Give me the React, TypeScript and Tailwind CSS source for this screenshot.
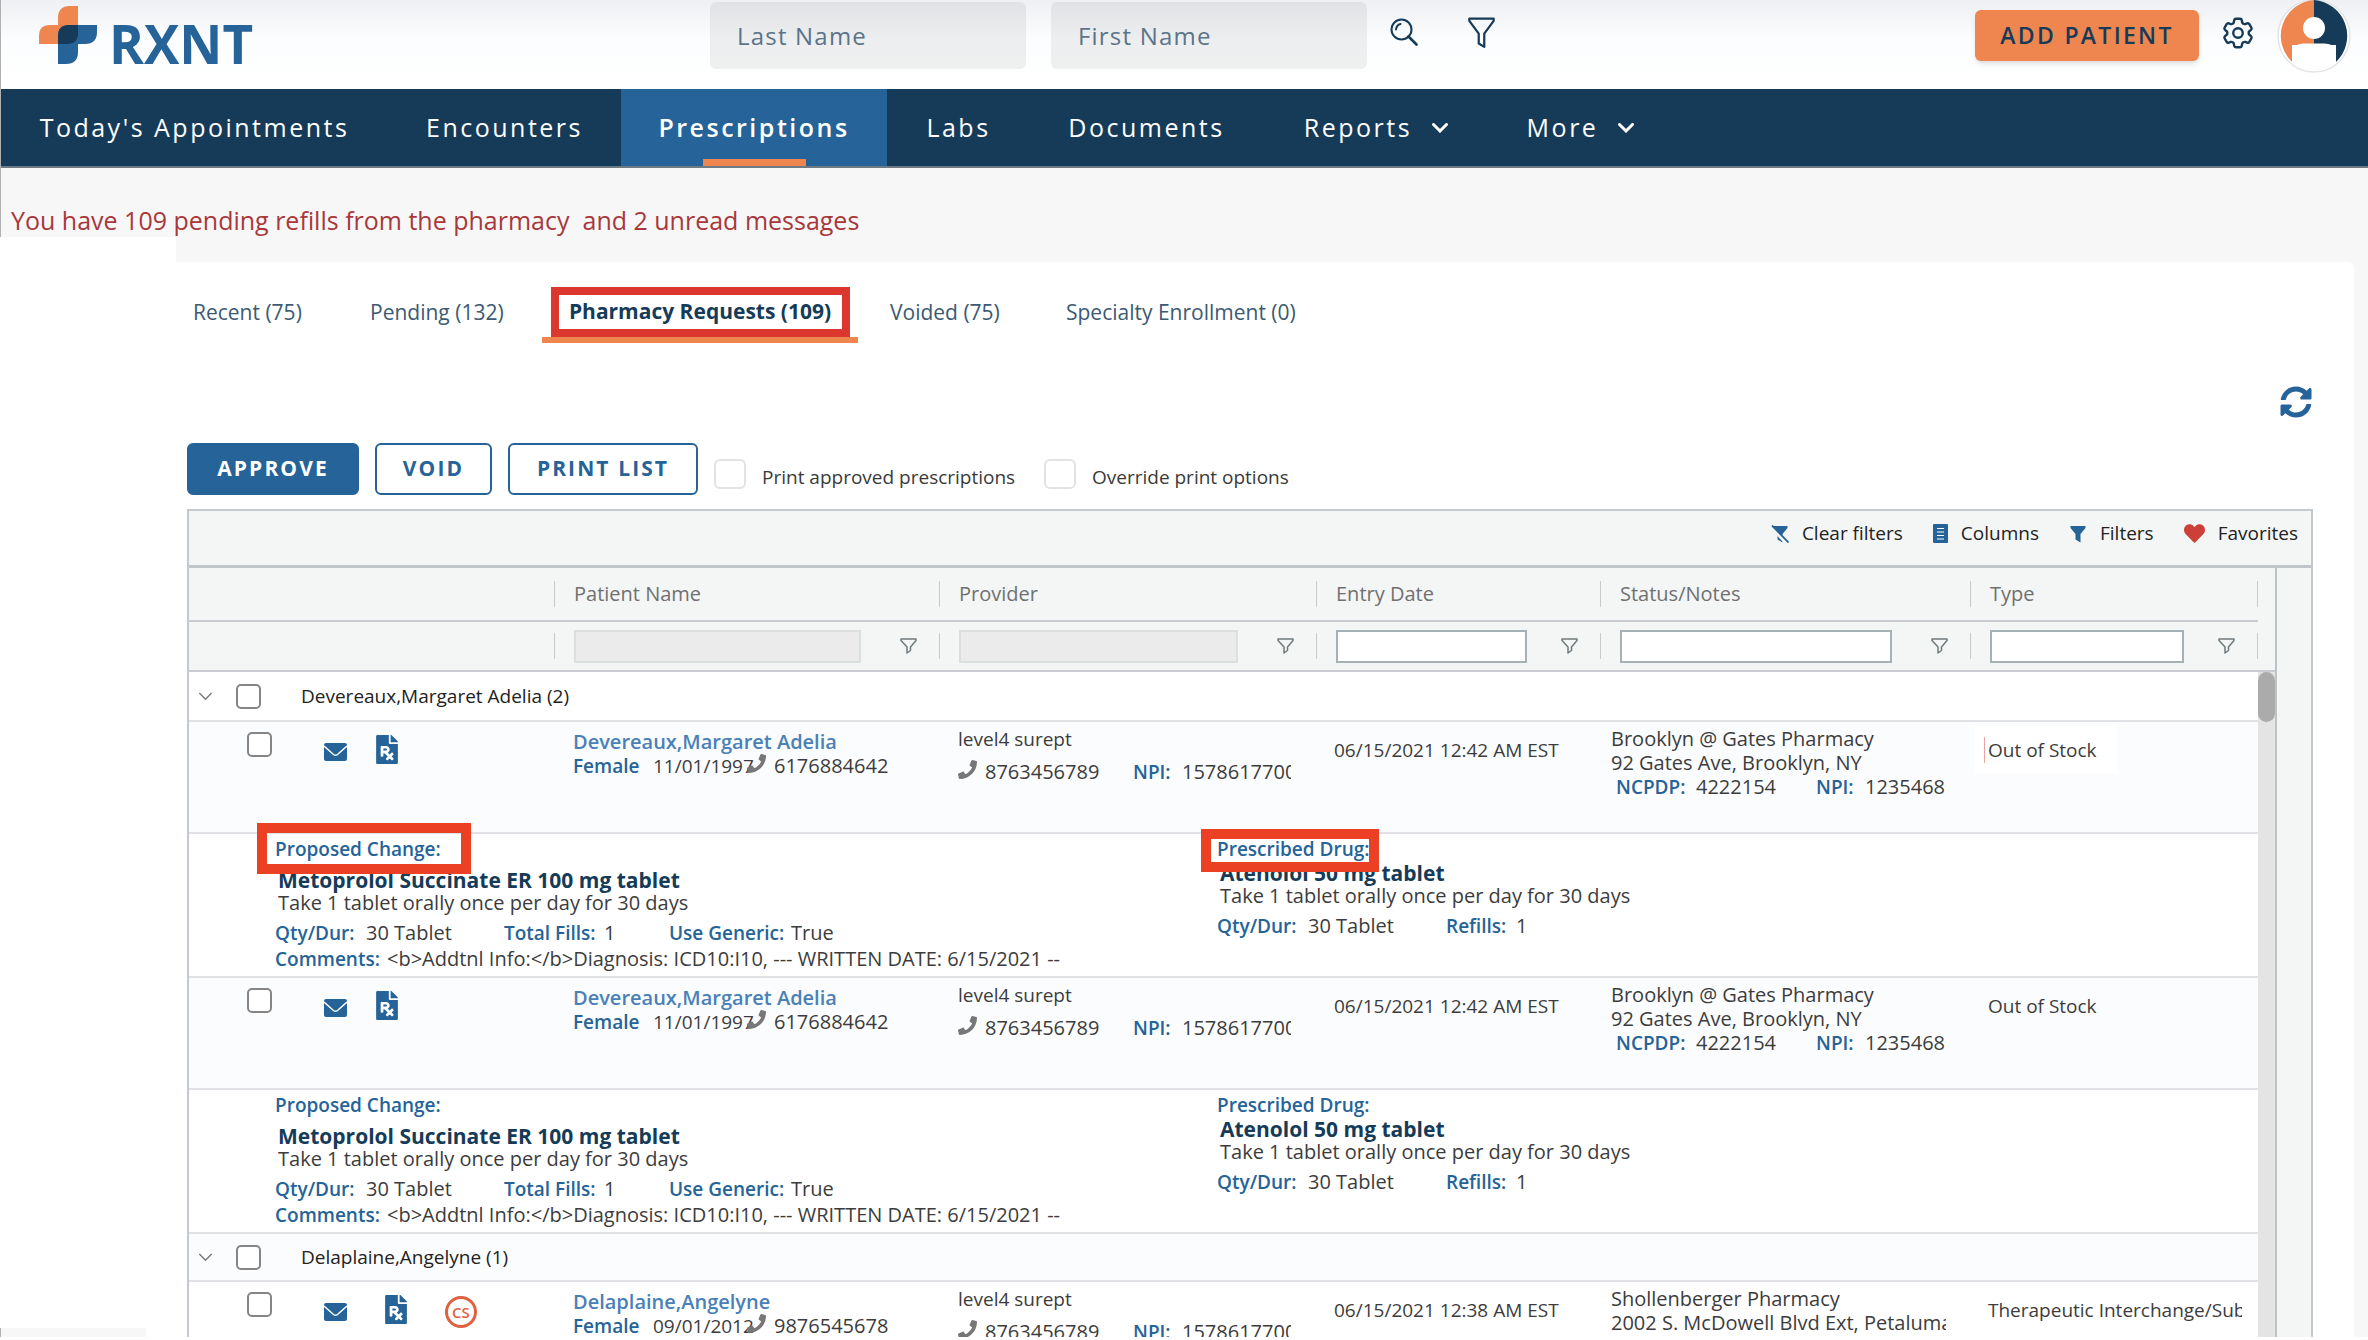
import React from "react";
import { FaFilePrescription, FaHeart, FaPhone, FaSyncAlt } from "react-icons/fa";
import { HiOutlineCog6Tooth } from "react-icons/hi2";

/* ---------- icons ---------- */

function Logo() {
  return (
    <svg viewBox="0 0 58 58" className="h-[58px] w-[58px]" aria-hidden="true">
      <path d="M19 38H0V30Q0 19 11 19H19V12Q19 0 31 0H39V19V28Q39 38 28 38Z" fill="#ef8650" />
      <path d="M19 58V30Q19 19 30 19H58V26Q58 38 46 38H39V46Q39 58 27 58Z" fill="#256398" />
      <path d="M19 38V30Q19 19 30 19H39V27Q39 38 28 38Z" fill="#153b59" />
    </svg>
  );
}

function SearchIcon() {
  return (
    <svg viewBox="0 0 28 28" className="h-[28px] w-[28px]" fill="none" stroke="#153b59" strokeWidth="2" strokeLinecap="round">
      <circle cx="11.5" cy="11.5" r="10" />
      <path d="M6 11.5Q6.500 7 10.500 6" />
      <path d="M18.500 18.500L26.500 26.500" strokeWidth="2.600" />
    </svg>
  );
}

function FunnelIcon({ className }: { className: string }) {
  return (
    <svg viewBox="0 0 24 28" className={className} fill="none" stroke="currentColor" strokeWidth="2" strokeLinejoin="round">
      <path d="M1 1.500H23V3.500L14.500 15V27L9.500 24V15L1 3.500Z" />
    </svg>
  );
}

function ColumnFilterIcon() {
  return (
    <svg viewBox="0 0 17 16" className="h-[16px] w-[17px] shrink-0" fill="none" stroke="#6f7a7c" strokeWidth="1.500" strokeLinejoin="round">
      <path d="M1 1H16V2.500L10.500 9V12.500L7 15V9L1 2.500Z" />
    </svg>
  );
}

function SolidFunnel({ slashed = false }: { slashed?: boolean }) {
  return (
    <svg viewBox="0 0 18 18" className="h-[18px] w-[18px]">
      <path d="M1.500 1H16.500V3L11.500 9V17.500L6.500 14.500V9L1.500 3Z" fill="#256398" />
      {slashed && <path d="M-1 1L15 18" stroke="#f4f6f6" strokeWidth="3" />}
      {slashed && <path d="M1 0.500L17.500 17.500" stroke="#256398" strokeWidth="1.800" />}
    </svg>
  );
}

function ColumnsIcon() {
  return (
    <svg viewBox="0 0 15 19" className="h-[19px] w-[15px]">
      <rect width="15" height="19" rx="1" fill="#256398" />
      <path d="M4 4.500H11M4 8H11M4 11.500H11M4 15H11" stroke="#fff" strokeWidth="1.200" />
    </svg>
  );
}

function EnvelopeIcon() {
  return (
    <svg viewBox="0 0 23 18" className="h-[18px] w-[23px]">
      <rect width="23" height="18" rx="2" fill="#256398" />
      <path d="M0 3L9.500 11.500Q11.500 13 13.500 11.500L23 3" fill="none" stroke="#fff" strokeWidth="1.500" />
    </svg>
  );
}

function Chevron({ className }: { className: string }) {
  return (
    <svg viewBox="0 0 16 10" className={className} fill="none" stroke="currentColor" strokeLinecap="round">
      <path d="M1.500 1.500L8 8L14.500 1.500" />
    </svg>
  );
}

function Avatar() {
  return (
    <svg viewBox="0 0 74 74" className="h-[74px] w-[74px]">
      <circle cx="37" cy="37" r="36" fill="#fff" stroke="#e3e4e6" strokeWidth="1.500" />
      <path d="M37 1A36 36 0 0 0 15 63V46H37Z" fill="#ef8650" />
      <path d="M37 1A36 36 0 0 1 59 63V46H37Z" fill="#153b59" />
      <path d="M15 63V56Q15 44.500 27 44.500H47Q59 44.500 59 56V63Z" fill="#fff" />
      <circle cx="37" cy="29" r="11" fill="#fff" />
    </svg>
  );
}

/* ---------- data ---------- */

const navItems = [
  { label: "Today's Appointments", width: "w-[387px]" },
  { label: "Encounters", width: "w-[233px]" },
  { label: "Prescriptions", width: "w-[266px]", active: true },
  { label: "Labs", width: "w-[143px]" },
  { label: "Documents", width: "w-[233px]" },
  { label: "Reports", width: "w-[226px]", menu: true },
  { label: "More", width: "w-[183px]", menu: true },
];

const columns = [
  { label: "Patient Name", disabled: true },
  { label: "Provider", disabled: true },
  { label: "Entry Date", narrow: true },
  { label: "Status/Notes" },
  { label: "Type", narrow: true },
];

const margaret = {
  name: "Devereaux,Margaret Adelia",
  dob: "11/01/1997",
  phone: "6176884642",
  date: "06/15/2021 12:42 AM EST",
  pharmacy: "Brooklyn @ Gates Pharmacy",
  address: "92 Gates Ave, Brooklyn, NY",
  type: "Out of Stock",
};

const angelyne = {
  name: "Delaplaine,Angelyne",
  dob: "09/01/2012",
  phone: "9876545678",
  date: "06/15/2021 12:38 AM EST",
  pharmacy: "Shollenberger Pharmacy",
  address: "2002 S. McDowell Blvd Ext, Petaluma",
  type: "Therapeutic Interchange/Sub",
};

type Request = typeof margaret;

/* ---------- page header ---------- */

function TopBar() {
  const field = "h-[67px] w-[316px] rounded-md bg-black/6 px-[27px] text-[24px] tracking-wider placeholder:text-[#5b7489]";
  return (
    <header className="flex h-[89px] shrink-0 items-start bg-linear-to-b from-[#eef0f3] via-[#fcfdfe] via-45% to-white pr-[17px] pl-[38px]">
      <a href="#home" className="flex w-[671px] shrink-0 gap-[12px] pt-[6px]">
        <Logo />
        <span className="pt-[11px] text-[53px] leading-[53px] font-bold text-[#256398]">RXNT</span>
      </a>
      <div className="flex gap-[25px] pt-[2px]">
        <input aria-label="Last Name" placeholder="Last Name" className={field} />
        <input aria-label="First Name" placeholder="First Name" className={field} />
      </div>
      <button aria-label="Search" className="mt-[18px] ml-[23px]">
        <SearchIcon />
      </button>
      <button aria-label="Filter patients" className="mt-[17px] ml-[50px] text-[#153b59]">
        <FunnelIcon className="h-[31px] w-[27px]" />
      </button>
      <button className="mt-[10px] ml-auto h-[51px] w-[224px] rounded-md bg-[#ef8650] text-[23px] font-semibold tracking-widest text-[#153b59] shadow-md">ADD PATIENT</button>
      <button aria-label="Settings" className="mt-[14px] ml-[20px] text-[#153b59]">
        <HiOutlineCog6Tooth className="h-[38px] w-[38px]" />
      </button>
      <button aria-label="Account" className="-mt-px ml-[20px]">
        <Avatar />
      </button>
    </header>
  );
}

function NavBar() {
  return (
    <nav className="flex h-[79px] shrink-0 border-b-2 border-[#6f7b84] bg-[#153b59] text-[25px] tracking-widest text-white">
      {navItems.map((item) => (
        <a
          key={item.label}
          href="#nav"
          className={`flex flex-col items-center whitespace-nowrap ${item.width} ${item.active ? "bg-[#256398] font-semibold" : ""}`}
        >
          <span className="flex flex-1 items-center gap-5 pt-[8px]">
            {item.label}
            {item.menu && <Chevron className="h-[10px] w-[16px] stroke-[3]" />}
          </span>
          <span className={`h-[7px] w-[103px] ${item.active ? "bg-[#ef8650]" : ""}`} />
        </a>
      ))}
    </nav>
  );
}

function Tabs() {
  return (
    <div className="flex h-[81px] items-end pl-[17px] text-[21px] text-[#3b5a73]">
      <a href="#recent" className="w-[177px] pb-[15px]">Recent (75)</a>
      <a href="#pending" className="w-[172px] pb-[15px]">Pending (132)</a>
      <a href="#pharmacy" className="flex w-[316px] flex-col items-center border-b-6 border-[#ef8650] font-bold text-[#153b59]">
        <span className="flex h-[50px] w-[299px] items-center justify-center border-8 border-[#db372f]">Pharmacy Requests (109)</span>
      </a>
      <a href="#voided" className="ml-[32px] w-[176px] pb-[15px]">Voided (75)</a>
      <a href="#specialty" className="pb-[15px]">Specialty Enrollment (0)</a>
    </div>
  );
}

function Actions() {
  const button = "h-[52px] rounded-md border-2 border-[#256398] text-[21px] font-bold tracking-widest";
  const box = "h-[30px] w-[32px] appearance-none rounded-md border-2 border-[#e2e2e2] bg-white";
  return (
    <div className="flex h-[52px] items-start pl-[11px] text-[19px] text-[#3a3a3a]">
      <button className={`${button} w-[172px] bg-[#256398] text-white`}>APPROVE</button>
      <button className={`${button} ml-4 w-[117px] text-[#256398]`}>VOID</button>
      <button className={`${button} ml-4 w-[190px] text-[#256398]`}>PRINT LIST</button>
      <label className="ml-4 flex w-[330px] items-start gap-4 pt-[16px]">
        <input type="checkbox" className={box} />
        <span className="pt-[4px]">Print approved prescriptions</span>
      </label>
      <label className="flex items-start gap-4 pt-[16px]">
        <input type="checkbox" className={box} />
        <span className="pt-[4px]">Override print options</span>
      </label>
    </div>
  );
}

/* ---------- grid ---------- */

function GridToolbar() {
  return (
    <div className="flex h-[54px] justify-end gap-[30px] pr-[13px] pb-[9px] text-[19px] text-[#222]">
      <button className="flex items-center gap-[13px]"><SolidFunnel slashed />Clear filters</button>
      <button className="flex items-center gap-[13px]"><ColumnsIcon />Columns</button>
      <button className="flex items-center gap-[13px]"><SolidFunnel />Filters</button>
      <button className="flex items-center gap-[13px]"><FaHeart className="h-[21px] w-[21px] text-[#cc4037]" />Favorites</button>
    </div>
  );
}

function Separator() {
  return <span className="h-[26px] w-px shrink-0 bg-[#c5cacc]" />;
}

function GridHead() {
  return (
    <thead className="bg-[#f4f6f6]">
      <tr className="h-[53px] border-b-2 border-[#c9cdd2]">
        <td />
        {columns.map((col, i) => (
          <th key={col.label} scope="col" className="p-0 text-left font-medium text-[#707070]">
            <div className="flex items-center">
              <Separator />
              <span className="flex-1 pl-[19px]">{col.label}</span>
              {i === 4 && <Separator />}
            </div>
          </th>
        ))}
      </tr>
      <tr className="h-[50px] border-b-2 border-[#c9cdd2]">
        <td />
        {columns.map((col, i) => (
          <td key={col.label} className="p-0">
            <div className="flex items-center">
              <Separator />
              <input
                aria-label={`${col.label} filter`}
                disabled={col.disabled}
                className={`ml-[19px] h-[33px] min-w-0 flex-1 border-2 border-[#a5b1b4] bg-white disabled:border-[#dcdfdf] disabled:bg-[#ebebeb] ${col.narrow ? "mr-[34px]" : "mr-[39px]"}`}
              />
              <ColumnFilterIcon />
              <span className="w-[22px]" />
              {i === 4 && <Separator />}
            </div>
          </td>
        ))}
      </tr>
    </thead>
  );
}

const checkbox = "h-[25px] w-[25px] appearance-none rounded-[5px] border-2 border-[#858585] bg-white";

function GroupRow({ label, tinted }: { label: string; tinted?: boolean }) {
  return (
    <tr className={`border-b-2 border-[#dfe1e4] ${tinted ? "h-[48px] bg-[#fbfcfe]" : "h-[50px] bg-white"}`}>
      <td colSpan={6} className="p-0">
        <div className="flex items-center pl-[9px] text-[19px] text-[#222]">
          <button aria-label="Collapse group">
            <Chevron className="h-[9px] w-[15px] stroke-[1.5] text-[#777]" />
          </button>
          <label className="flex items-center gap-[40px] pl-[23px]">
            <input type="checkbox" className={checkbox} />
            {label}
          </label>
        </div>
      </td>
    </tr>
  );
}

function Label({ children }: { children: React.ReactNode }) {
  return <span className="text-[19px] font-semibold text-[#256398]">{children}</span>;
}

function RequestRow({ request, tinted, controlled, edited }: { request: Request; tinted?: boolean; controlled?: boolean; edited?: boolean }) {
  return (
    <tr className={`h-[112px] border-b-2 border-[#dfe1e4] align-top whitespace-nowrap ${tinted ? "bg-[#fbfcfe]" : "bg-white"}`}>
      <td className="p-0">
        <div className="flex items-start pt-[10px] pl-[58px]">
          <input type="checkbox" aria-label={`Select ${request.name}`} className={checkbox} />
          <button aria-label="Message" className="mt-[11px] ml-[52px]"><EnvelopeIcon /></button>
          <button aria-label="Prescription" className={`mt-[3px] text-[#256398] ${controlled ? "ml-[38px]" : "ml-[29px]"}`}>
            <FaFilePrescription className="h-[29px] w-[22px]" />
          </button>
          {controlled && (
            <span className="mt-[4px] ml-[38px] flex h-[32px] w-[32px] items-center justify-center rounded-full border-3 border-[#e2603f] text-[15px] font-semibold text-[#e2603f]">CS</span>
          )}
        </div>
      </td>
      <td className="p-0">
        <div className="pt-[8px] pl-[19px]">
          <a href="#patient" className="block font-semibold text-[#4a80b8]">{request.name}</a>
          <div className="flex">
            <span className="w-[80px]"><Label>Female</Label></span>
            <span className="w-[94px] text-[19px]">{request.dob}</span>
            <FaPhone className="h-[19px] w-[19px] text-[#777]" />
            <span className="pl-[8px]">{request.phone}</span>
          </div>
        </div>
      </td>
      <td className="p-0">
        <div className="mr-[25px] overflow-hidden pt-[5px] pl-[19px]">
          <div className="text-[19px]">level4 surept</div>
          <div className="flex pt-[9px]">
            <FaPhone className="h-[19px] w-[19px] shrink-0 text-[#777]" />
            <span className="w-[156px] shrink-0 pl-[8px]">8763456789</span>
            <span className="w-[49px] shrink-0"><Label>NPI:</Label></span>
            <span>1578617700</span>
          </div>
        </div>
      </td>
      <td className="p-0 pt-[16px] pl-[18px] text-[19px]">{request.date}</td>
      <td className="p-0">
        <div className="mr-[24px] overflow-hidden pt-[5px] pl-[11px]">
          <div>{request.pharmacy}</div>
          <div>{request.address}</div>
          <div className="flex pl-[5px]">
            <span className="w-[80px] shrink-0"><Label>NCPDP:</Label></span>
            <span className="w-[120px] shrink-0">4222154</span>
            <span className="w-[49px] shrink-0"><Label>NPI:</Label></span>
            <span>1235468</span>
          </div>
        </div>
      </td>
      <td className="p-0 text-[19px]">
        <div className={`mt-[4px] mr-[16px] ml-[5px] overflow-hidden py-[12px] pl-[9px] ${edited ? "w-[143px] bg-white" : ""}`}>
          <span className={`border-l pl-[3px] ${edited ? "border-[#e8a5a5]" : "border-transparent"}`}>{request.type}</span>
        </div>
      </td>
    </tr>
  );
}

function DetailRow({ marked }: { marked?: boolean }) {
  return (
    <tr className="h-[144px] border-b-2 border-[#dfe1e4] bg-white align-top whitespace-nowrap">
      <td colSpan={6} className="p-0">
        <div className="flex pt-[3px] pl-[86px]">
          <div className="relative w-[942px]">
            <Label>Proposed Change:</Label>
            <div className="mt-[7px] pl-[3px] text-[21px] font-bold text-[#153b59]">Metoprolol Succinate ER 100 mg tablet</div>
            <div className="pl-[3px] leading-[22px]">Take 1 tablet orally once per day for 30 days</div>
            <div className="mt-[7px] flex">
              <span className="w-[91px]"><Label>Qty/Dur:</Label></span>
              <span className="w-[138px]">30 Tablet</span>
              <span className="w-[100px]"><Label>Total Fills:</Label></span>
              <span className="w-[65px]">1</span>
              <span className="w-[122px]"><Label>Use Generic:</Label></span>
              <span>True</span>
            </div>
            <div className="mt-[2px] flex">
              <span className="w-[112px]"><Label>Comments:</Label></span>
              <span>{"<b>Addtnl Info:</b>Diagnosis: ICD10:I10, --- WRITTEN DATE: 6/15/2021 --"}</span>
            </div>
            {marked && <div className="absolute -top-[14px] -left-[18px] h-[51px] w-[214px] border-10 border-[#ec4024]" />}
          </div>
          <div className="relative">
            <Label>Prescribed Drug:</Label>
            <div className="pl-[3px] text-[21px] font-bold text-[#153b59]">Atenolol 50 mg tablet</div>
            <div className="pl-[3px] leading-[22px]">Take 1 tablet orally once per day for 30 days</div>
            <div className="mt-[7px] flex">
              <span className="w-[91px]"><Label>Qty/Dur:</Label></span>
              <span className="w-[138px]">30 Tablet</span>
              <span className="w-[70px]"><Label>Refills:</Label></span>
              <span>1</span>
            </div>
            {marked && <div className="absolute -top-[8px] -left-[16px] h-[43px] w-[178px] border-10 border-[#ec4024]" />}
          </div>
        </div>
      </td>
    </tr>
  );
}

function RequestGrid() {
  return (
    <section className="mt-[14px] mr-[41px] ml-[11px] flex min-h-0 flex-1 flex-col border-2 border-b-0 border-[#c3c9cc] bg-[#f4f6f6]">
      <GridToolbar />
      <div className="flex min-h-0 flex-1 overflow-hidden border-t-3 border-[#bfc5c8]">
        <div className="min-w-0 flex-1">
          <table className="w-full table-fixed border-collapse text-[20px] leading-[24px] text-[#3c3c3c]">
            <colgroup>
              <col className="w-[365px]" />
              <col className="w-[385px]" />
              <col className="w-[377px]" />
              <col className="w-[284px]" />
              <col className="w-[370px]" />
              <col />
            </colgroup>
            <GridHead />
            <tbody>
              <GroupRow label="Devereaux,Margaret Adelia (2)" />
              <RequestRow request={margaret} tinted edited />
              <DetailRow marked />
              <RequestRow request={margaret} tinted />
              <DetailRow />
              <GroupRow label="Delaplaine,Angelyne (1)" tinted />
              <RequestRow request={angelyne} controlled />
            </tbody>
          </table>
        </div>
        <div className="flex w-[17px] flex-col bg-[#e4e4e4]">
          <div className="h-[104px] shrink-0 border-b-2 border-[#c9cdd2] bg-[#f4f6f6]" />
          <div className="h-[50px] rounded-full bg-[#ababab]" />
        </div>
        <div className="w-[36px] border-l-2 border-[#bcc4c8]" />
      </div>
    </section>
  );
}

export default function App() {
  return (
    <div className="flex h-screen flex-col overflow-hidden bg-white pb-[3px] font-['Open_Sans',sans-serif]">
      <div className="shrink-0 border-l border-[#b0b0b0]">
        <TopBar />
        <NavBar />
        <p className="h-[69px] bg-[#f7f7f7] pt-[35px] pl-[10px] text-[25px] leading-[34px] whitespace-pre text-[#a8383b]">
          You have 109 pending refills from the pharmacy  and 2 unread messages
        </p>
      </div>
      <div className="flex min-h-0 flex-1 bg-[#f7f7f7]">
        <aside className="flex w-[176px] shrink-0 flex-col justify-end bg-white">
          <div className="h-[9px] w-[146px] border-l border-[#b0b0b0] bg-[#f7f7f7]" />
        </aside>
        <main className="mt-[25px] mr-[14px] flex min-w-0 flex-1 flex-col rounded-tr-md bg-white">
          <Tabs />
          <div className="flex h-[100px] items-center justify-end pt-[18px] pr-[42px]">
            <button aria-label="Refresh" className="text-[#256398]">
              <FaSyncAlt className="h-[32px] w-[32px]" />
            </button>
          </div>
          <Actions />
          <RequestGrid />
        </main>
      </div>
    </div>
  );
}
